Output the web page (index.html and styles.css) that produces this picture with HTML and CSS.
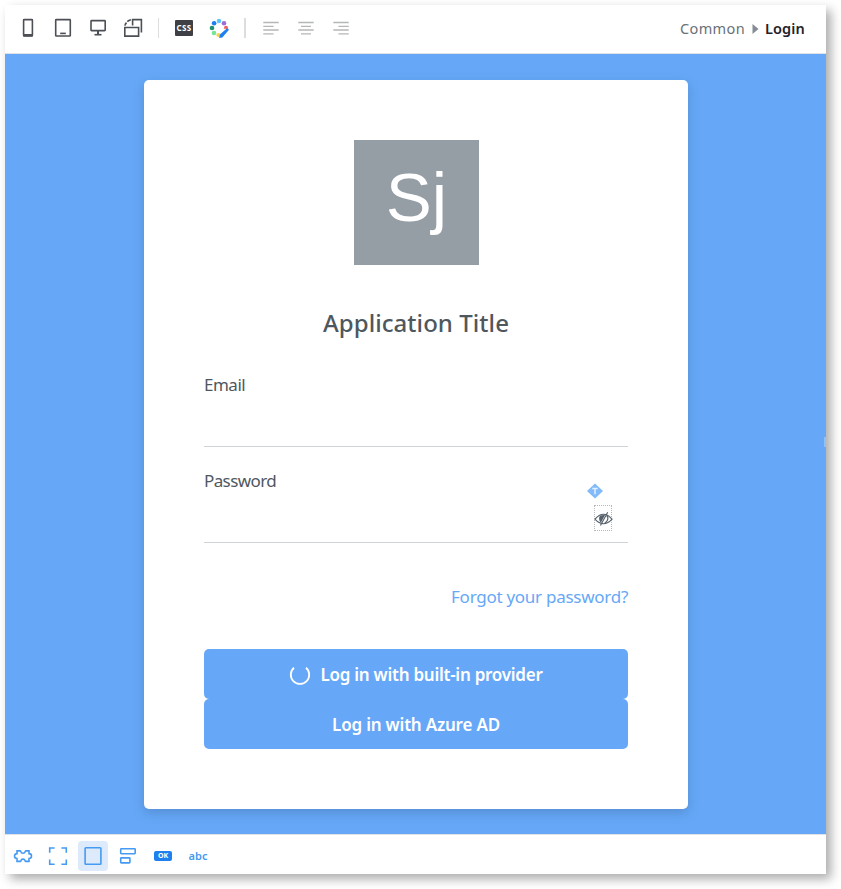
FILE: index.html
```html
<!DOCTYPE html>
<html lang="en">
<head>
<meta charset="utf-8">
<title>Login</title>
<link rel="stylesheet" href="styles.css">
</head>
<body>
<div class="window">
  <header class="toolbar">
    <svg class="icon dark" viewBox="0 0 24 24"><rect x="7.6" y="3.6" width="8.8" height="16.3" rx=".6"/><path d="M7 19.2h10" stroke-width="2.4"/></svg>
    <svg class="icon dark" viewBox="0 0 24 24"><rect x="4.7" y="3.6" width="14.6" height="16.4" rx=".6"/><path d="M9.2 17.4h5.6"/></svg>
    <svg class="icon dark" viewBox="0 0 24 24"><rect x="5" y="4.6" width="14.2" height="10" rx=".6"/><path d="M12 14.6v4" stroke-width="2"/><path d="M8.5 18.7h7"/></svg>
    <svg class="icon dark" viewBox="0 0 24 24"><path d="M3.8 11.5h13.8v8.6H3.8zM11.6 9.6V3.6h8.8v13M3.9 9.6q.4-1.8 1.6-3M6.3 5.6q1.4-1.4 3.6-1.9"/></svg>
    <span class="divider"></span>
    <span class="icon css-cell"><b class="css-badge">CSS</b></span>
    <svg class="icon wheel" viewBox="0 0 24 24">
      <circle cx="12" cy="5" r="2.3" fill="#5cc8fa"/><circle cx="17" cy="7.2" r="2.3" fill="#a06bd8"/>
      <circle cx="19" cy="11.8" r="2" fill="#f2605c"/><circle cx="11.4" cy="19" r="2.1" fill="#f9d54a"/>
      <circle cx="7" cy="17" r="2.3" fill="#75e39b"/><circle cx="5" cy="12" r="2.3" fill="#1d9270"/><circle cx="7.1" cy="7.2" r="2.3" fill="#1e80ee"/>
      <path d="M20.2 14.2l-6.4 6.2" stroke="#fff" stroke-width="4.4"/><path d="M12.2 22l.6-3.4 7-6q1.8-.4 2 1.4L15.3 21.4z" fill="#1e80ee"/>
    </svg>
    <span class="divider thick"></span>
    <svg class="icon muted" viewBox="0 0 24 24"><path d="M4.3 6.5h15.4M4.3 10.3h10.3M4.3 14h15.4M4.3 17.8h10.3"/></svg>
    <svg class="icon muted" viewBox="0 0 24 24"><path d="M4.3 6.5h15.4M7 10.3h10M4.3 14h15.4M7 17.8h10"/></svg>
    <svg class="icon muted" viewBox="0 0 24 24"><path d="M4.3 6.5h15.4M9.4 10.3h10.3M4.3 14h15.4M9.4 17.8h10.3"/></svg>
    <nav class="crumbs"><span class="parent">Common</span><svg class="caret" viewBox="0 0 7 10"><path d="M.5 0L6.5 5L.5 10z"/></svg><strong class="current">Login</strong></nav>
  </header>
  <main class="canvas">
    <span class="handle"></span>
    <section class="card">
      <div class="avatar">Sj</div>
      <h1 class="title">Application Title</h1>
      <div class="field"><label class="label email">Email</label></div>
      <div class="field">
        <label class="label password">Password</label>
        <svg class="tag" viewBox="0 0 18 16"><path d="M9 .5L17 8L9 15.5L1 8z" fill="#83bbfa"/><path d="M6.3 5.6h5.4M9 5.6v5.6" stroke="#e3f0ff" stroke-width="1.5"/></svg>
        <span class="reveal"><svg class="eye" viewBox="0 0 20 14"><path d="M1 7.2Q5.3 2 10 2t9 5.2Q14.7 12 10 12T1 7.2z"/><path d="M13.2 3.2q2.4 2.4.8 5.4-1 1.8-2.6 2.6"/><path d="M11.8 2.6L7.2 11Q4 7 6.4 3.2z" fill="#56606a" stroke="none"/><path d="M14.4 0L6.8 13.8"/></svg></span>
      </div>
      <a class="forgot">Forgot your password?</a>
      <button class="btn"><svg class="spinner" viewBox="0 0 22 22"><path d="M5 3.7A9.2 9.2 0 1 0 17 3.7"/></svg><span class="builtin">Log in with built-in provider</span></button>
      <button class="btn"><span class="azure">Log in with Azure AD</span></button>
    </section>
  </main>
  <footer class="widgets">
    <svg class="icon blue" viewBox="0 0 24 24"><path d="M6 6.9h3.2q.6 0 .7.8.4 1.5 2.1 1.5t2.1-1.5q.1-.8.7-.8H18v2.7q2.5 0 2.5 2.5T18 14.6v2.8h-3.2q-.6 0-.7-.8-.4-1.5-2.1-1.5t-2.1 1.5q-.1.8-.7.8H6v-2.8q-2.5 0-2.5-2.5T6 9.6z"/></svg>
    <svg class="icon blue" viewBox="0 0 24 24"><path d="M8.6 4H3.7v4.8M15.4 4h4.9v4.8M8.6 20.3H3.7v-4.8M15.4 20.3h4.9v-4.8"/></svg>
    <svg class="icon blue active" viewBox="0 0 24 24"><rect x="4.1" y="3.8" width="15.8" height="16.4" rx=".7"/></svg>
    <svg class="icon blue" viewBox="0 0 24 24"><rect x="4.7" y="4.8" width="14.5" height="4.9" rx=".6"/><rect x="4.7" y="13.9" width="9.2" height="5" rx=".6"/></svg>
    <span class="icon ok-cell"><b class="ok-badge">OK</b></span>
    <span class="icon abc">abc</span>
  </footer>
</div>
</body>
</html>
```
FILE: styles.css
```css
* { box-sizing: border-box; }
body { margin: 0; padding: 5px 15px 15px 5px; height: 889px; background: #fff; overflow: hidden; font-family: "Noto Sans", sans-serif; }
.window { width: 821px; height: 869px; display: flex; flex-direction: column; background: #fff; box-shadow: 5px 5px 10px rgba(0,0,0,.33); }
.toolbar { height: 49px; flex: none; display: flex; align-items: center; gap: 11px; padding: 0 21px 2px 11px; border-bottom: 1px solid #dee2e6; }
.icon { width: 24px; height: 24px; flex: none; fill: none; stroke-width: 1.6; }
.dark { stroke: #4c4f54; }
.muted { stroke: #b4b6b8; stroke-width: 1.3; }
.blue { stroke: #459af2; }
.divider { width: 1px; height: 20px; margin: 0 2px; background: #dcdddf; }
.thick { width: 2px; }
.css-cell, .ok-cell { display: flex; align-items: center; justify-content: center; }
.css-badge { width: 18px; height: 16px; border-radius: 1px; background: #3e4045; color: #fff; font-size: 8px; line-height: 16px; text-align: center; letter-spacing: .3px; }
.crumbs { margin-left: auto; display: flex; align-items: center; font-size: 14.5px; line-height: 20px; padding-top: 0; }
.parent { color: #6a7178; letter-spacing: .35px; }
.caret { width: 7px; height: 10px; margin: 2px 6px 0 7px; fill: #868c95; }
.current { color: #1d2228; font-weight: 600; letter-spacing: .15px; }
.canvas { position: relative; flex: 1; padding: 26px 138px 0 139px; background: #66a8f7; overflow: hidden; }
.handle { position: absolute; right: 0; top: 383px; width: 2px; height: 10px; background: #8fc0fa; }
.card { height: 729px; padding: 60px; background: #fff; border-radius: 5px; box-shadow: 0 4px 12px rgba(40,75,120,.28); display: flex; flex-direction: column; }
.avatar { width: 125px; height: 125px; flex: none; align-self: center; background: #959da5; color: #fff; font: 69px/115px "Liberation Sans", sans-serif; text-align: center; padding-left: 1px; }
.title { margin: 40px 0 29px; text-align: center; font-size: 24px; line-height: 36px; font-weight: 500; letter-spacing: .06px; color: #4f575e; white-space: nowrap; }
.field { position: relative; height: 77px; flex: none; border-bottom: 1px solid #ced4da; margin-bottom: 19px; }
.label { display: block; font-size: 17px; line-height: 30px; color: #4f575e; }
.email { letter-spacing: -.5px; }
.password { letter-spacing: -.6px; }
.tag { position: absolute; left: 382px; top: 17px; width: 18px; height: 16px; }
.reveal { position: absolute; left: 390px; top: 39px; width: 18px; height: 26px; border: 1px dotted #b5b9bd; }
.eye { position: absolute; left: -1px; top: 6px; width: 19px; height: 14px; fill: none; stroke: #56606a; stroke-width: 1.2; }
.forgot { align-self: flex-end; margin: 20px 0 37px; font-size: 17px; line-height: 30px; letter-spacing: -.27px; color: #66a8f7; white-space: nowrap; }
.btn { height: 50px; flex: none; display: flex; align-items: center; justify-content: center; gap: 9px; padding: 2px 0 0; border: 0; border-radius: 5px; background: #66a8f7; color: #fff; font: 600 17px/24px "Noto Sans", sans-serif; white-space: nowrap; }
.builtin { letter-spacing: -.25px; }
.azure { letter-spacing: -.2px; }
.spinner { width: 22px; height: 22px; fill: none; stroke: #fff; stroke-width: 1.8; }
.widgets { height: 40px; flex: none; display: flex; align-items: center; gap: 11px; padding: 2px 6px 0; border-top: 1px solid #dee2e6; }
.active { width: 30px; height: 30px; padding: 3px; margin: 0 -3px; border-radius: 4px; background: #dceafb; }
.ok-badge { width: 18px; height: 10px; border-radius: 2px; background: #1e80ee; color: #fff; font-size: 7px; line-height: 10px; text-align: center; }
.abc { display: flex; align-items: center; justify-content: center; color: #459af2; font-size: 11px; font-weight: 600; }
```
